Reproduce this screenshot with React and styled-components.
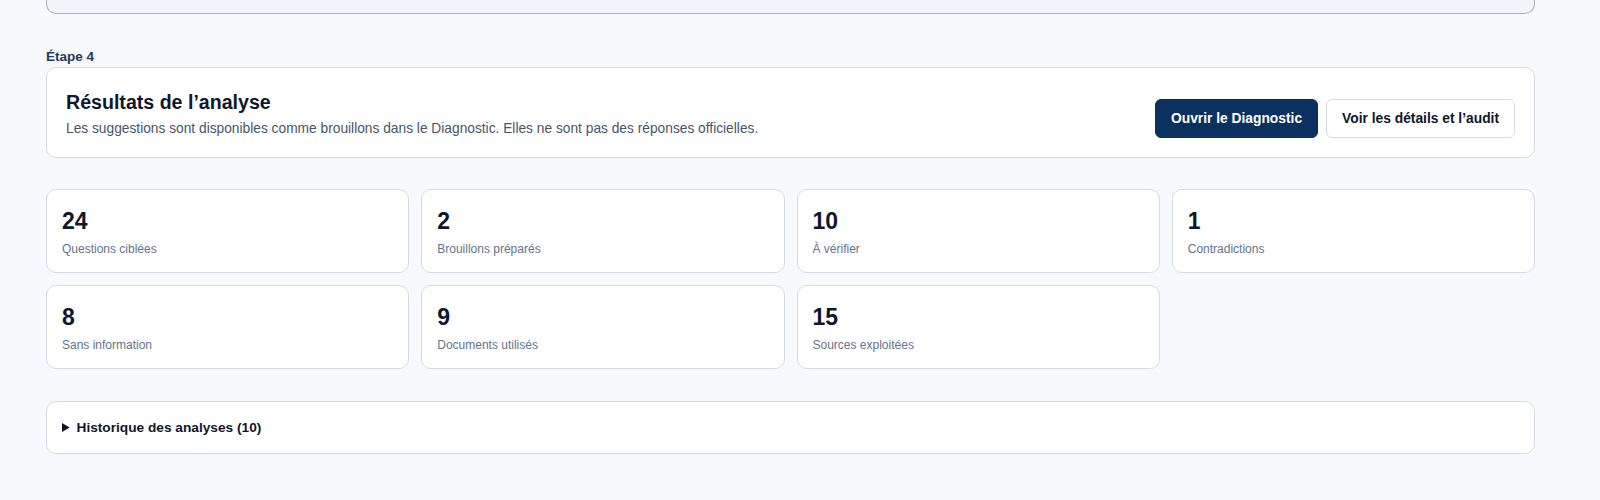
import React from 'react';
import styled, { createGlobalStyle } from 'styled-components';

const GlobalStyle = createGlobalStyle`
  body {
    margin: 0;
    background: #f7f9fc;
    font-family: "Liberation Sans", Arial, sans-serif;
    color: #0f172a;
  }
`;

const stats = [
  { value: 24, label: 'Questions ciblées' },
  { value: 2, label: 'Brouillons préparés' },
  { value: 10, label: 'À vérifier' },
  { value: 1, label: 'Contradictions' },
  { value: 8, label: 'Sans information' },
  { value: 9, label: 'Documents utilisés' },
  { value: 15, label: 'Sources exploitées' },
];

const App = () => {
  return (
    <>
      <GlobalStyle />
      <Page>
        <PreviousCard />
        <StepLabel>Étape 4</StepLabel>
        <ResultCard>
          <ResultText>
            <Title>Résultats de l’analyse</Title>
            <Subtitle>
              Les suggestions sont disponibles comme brouillons dans le Diagnostic. Elles ne sont pas des réponses officielles.
            </Subtitle>
          </ResultText>
          <Actions>
            <Button $primary>Ouvrir le Diagnostic</Button>
            <Button>Voir les détails et l’audit</Button>
          </Actions>
        </ResultCard>

        <StatGrid>
          {stats.map((s) => (
            <StatCard key={s.label}>
              <StatValue>{s.value}</StatValue>
              <StatLabel>{s.label}</StatLabel>
            </StatCard>
          ))}
        </StatGrid>

        <History>
          <summary>Historique des analyses (10)</summary>
        </History>
      </Page>
    </>
  );
};

const Page = styled.div`
  width: 1489px;
  margin-left: 46px;
  padding-bottom: 36px;
`;

const PreviousCard = styled.div`
  height: 13px;
  background: #f1f4f9;
  border: 1px solid #a9b1bf;
  border-top: none;
  border-radius: 0 0 10px 10px;
`;

const StepLabel = styled.div`
  margin-top: 35px;
  margin-bottom: 2px;
  font-size: 13.5px;
  line-height: 16px;
  font-weight: 700;
  color: #1e3a5f;
`;

const ResultCard = styled.div`
  display: flex;
  align-items: flex-end;
  justify-content: space-between;
  background: #fff;
  border: 1px solid #d6dbe3;
  border-radius: 10px;
  padding: 22px 19px 19px 19px;
`;

const ResultText = styled.div`
  display: flex;
  flex-direction: column;
  gap: 6px;
`;

const Title = styled.h2`
  margin: 0;
  font-size: 19.6px;
  line-height: 24px;
  font-weight: 700;
  color: #0f172a;
`;

const Subtitle = styled.p`
  margin: 0;
  font-size: 13.75px;
  line-height: 18px;
  color: #475569;
`;

const Actions = styled.div`
  display: flex;
  gap: 8px;
`;

const Button = styled.button`
  height: 39px;
  padding: 0 15px;
  border-radius: 6px;
  font-family: inherit;
  font-size: 13.8px;
  font-weight: 700;
  cursor: pointer;
  border: 1px solid ${(p) => (p.$primary ? '#0b3160' : '#d6dbe3')};
  background: ${(p) => (p.$primary ? '#0b3160' : '#fff')};
  color: ${(p) => (p.$primary ? '#fff' : '#0f172a')};
`;

const StatGrid = styled.div`
  margin-top: 31px;
  display: grid;
  grid-template-columns: repeat(4, 1fr);
  gap: 12px;
`;

const StatCard = styled.div`
  background: #fff;
  border: 1px solid #d6dbe3;
  border-radius: 10px;
  padding: 18px 15px 15px;
`;

const StatValue = styled.div`
  font-size: 23px;
  line-height: 26px;
  font-weight: 700;
  color: #0f172a;
`;

const StatLabel = styled.div`
  margin-top: 7px;
  font-size: 12px;
  line-height: 16px;
  color: #64748b;
`;

const History = styled.details`
  margin-top: 32px;
  background: #fff;
  border: 1px solid #d6dbe3;
  border-radius: 10px;
  padding: 17.5px 15px;

  summary {
    font-size: 13.7px;
    line-height: 16px;
    font-weight: 700;
    color: #0f172a;
    cursor: pointer;
  }
`;

export default App;
